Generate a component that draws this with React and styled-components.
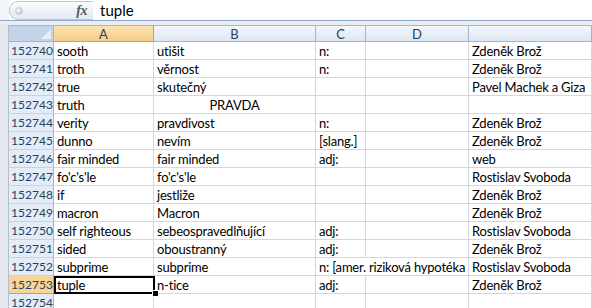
import React from "react";
import styled, { createGlobalStyle, css } from "styled-components";

const GlobalStyle = createGlobalStyle`
  html, body { margin: 0; padding: 0; background: #ffffff; overflow: hidden; }
  * { box-sizing: border-box; }
`;

const FONT = `Lato, "Liberation Sans", sans-serif`;

const Window = styled.div`
  width: 592px;
  height: 308px;
  overflow: hidden;
  background: #e9eef5;
  font-family: ${FONT};
  display: flex;
  flex-direction: column;
`;

const FormulaBar = styled.div`
  height: 21px;
  flex: none;
  display: flex;
  align-items: stretch;
  background: #ffffff;
  border-bottom: 1px solid #8fa9c9;
`;

const LeftGap = styled.div`
  width: 9px;
  flex: none;
  background: #f1f4f8;
`;

const FxBox = styled.div`
  width: 84px;
  flex: none;
  margin: 1px 0 0 0;
  display: flex;
  align-items: center;
  justify-content: space-between;
  padding: 0 6px 0 5px;
  border: 1px solid #b7c8dd;
  border-right: none;
  border-radius: 9px 0 0 9px;
  background: linear-gradient(#fbfcfe, #e2e9f3);
`;

const Knob = styled.span`
  width: 8px;
  height: 8px;
  border-radius: 50%;
  background: radial-gradient(circle at 35% 35%, #ffffff, #b4b9c0);
  border: 1px solid #c9ced5;
`;

const FxLabel = styled.span`
  font-family: "Liberation Serif", serif;
  font-style: italic;
  font-weight: bold;
  font-size: 14px;
  color: #555a60;
  letter-spacing: -0.5px;
`;

const FormulaText = styled.div`
  flex: 1;
  display: flex;
  align-items: center;
  padding-left: 7px;
  font-size: 15px;
  color: #000;
`;

const Spacer = styled.div`
  height: 4px;
  flex: none;
  background: #e9edf2;
`;

const SheetArea = styled.div`
  flex: 1;
  display: flex;
  min-height: 0;
`;

const LeftStrip = styled.div`
  width: 9px;
  flex: none;
  background: #e4e8ee;
  border-right: 1px solid #b3bfcd;
`;

const Grid = styled.div`
  flex: 1;
  display: grid;
  grid-template-columns: 45px 100px 162px 50px 103px 1fr;
  grid-auto-rows: 18px;
  grid-template-rows: 17px;
  background: #ffffff;
  align-content: start;
`;

const headerBase = css`
  display: flex;
  align-items: center;
  justify-content: center;
  font-size: 13px;
  color: #27415f;
  border-right: 1px solid #9eb6ce;
  border-bottom: 1px solid #9eb6ce;
  border-top: 1px solid #9eb6ce;
`;

const Corner = styled.div`
  ${headerBase};
  position: relative;
  background: #c2d3ea;
  &::after {
    content: "";
    position: absolute;
    right: 2px;
    bottom: 2px;
    border-style: solid;
    border-width: 0 0 10px 10px;
    border-color: transparent transparent #e6eef8 transparent;
  }
`;

const ColHeader = styled.div`
  ${headerBase};
  background: ${(p) =>
    p.$active
      ? "linear-gradient(#fbe3b4, #f6cd84)"
      : "linear-gradient(#f5f8fc, #dde6f1)"};
  border-right-color: ${(p) => (p.$active ? "#f29436" : "#9eb6ce")};
  border-bottom-color: ${(p) => (p.$active ? "#f29436" : "#9eb6ce")};
`;

const RowHeader = styled.div`
  display: flex;
  align-items: center;
  justify-content: center;
  padding-left: 2px;
  font-size: 12px;
  color: #27415f;
  background: ${(p) => (p.$active ? "#f8d597" : "#e4ecf7")};
  border-right: 1px solid ${(p) => (p.$active ? "#f29436" : "#9eb6ce")};
  border-bottom: 1px solid ${(p) => (p.$active ? "#f29436" : "#c5d3e6")};
`;

const Cell = styled.div`
  position: relative;
  display: flex;
  align-items: center;
  justify-content: ${(p) => (p.$center ? "center" : "flex-start")};
  padding-left: ${(p) => (p.$center ? "0" : "3px")};
  font-size: 13px;
  letter-spacing: -0.2px;
  color: #000;
  white-space: nowrap;
  overflow: visible;
  border-right: 1px solid #d0d7e5;
  border-bottom: 1px solid #d0d7e5;
  ${(p) => p.$span && `grid-column: span ${p.$span};`}
  ${(p) => p.$selected && `z-index: 2;`}
`;

const SelectionBox = styled.span`
  position: absolute;
  left: 0;
  top: 0;
  right: -2px;
  bottom: -1px;
  border: 2px solid #000;
  pointer-events: none;
`;

const FillHandle = styled.span`
  position: absolute;
  left: 98px;
  top: 14px;
  width: 7px;
  height: 7px;
  background: #000;
  border: 1px solid #fff;
`;

const rows = [
  [152740, "sooth", "utišit", "n:", "", "Zdeněk Brož"],
  [152741, "troth", "věrnost", "n:", "", "Zdeněk Brož"],
  [152742, "true", "skutečný", "", "", "Pavel Machek a Giza"],
  [152743, "truth", { t: "PRAVDA", center: true }, "", "", ""],
  [152744, "verity", "pravdivost", "n:", "", "Zdeněk Brož"],
  [152745, "dunno", "nevím", "[slang.]", "", "Zdeněk Brož"],
  [152746, "fair minded", "fair minded", "adj:", "", "web"],
  [152747, "fo'c's'le", "fo'c's'le", "", "", "Rostislav Svoboda"],
  [152748, "if", "jestliže", "", "", "Zdeněk Brož"],
  [152749, "macron", "Macron", "", "", "Zdeněk Brož"],
  [152750, "self righteous", "sebeospravedlňující", "adj:", "", "Rostislav Svoboda"],
  [152751, "sided", "oboustranný", "adj:", "", "Zdeněk Brož"],
  [152752, "subprime", "subprime", { t: "n: [amer. riziková hypotéka", span: 2 }, null, "Rostislav Svoboda"],
  [152753, "tuple", "n-tice", "adj:", "", "Zdeněk Brož"],
  [152754, "", "", "", "", ""],
];

const ACTIVE_ROW = 152753;

export default function App() {
  return (
    <>
      <GlobalStyle />
      <Window>
        <FormulaBar>
          <LeftGap />
          <FxBox>
            <Knob />
            <FxLabel>fx</FxLabel>
          </FxBox>
          <FormulaText>tuple</FormulaText>
        </FormulaBar>
        <Spacer />
        <SheetArea>
          <LeftStrip />
          <Grid>
            <Corner />
            <ColHeader $active>A</ColHeader>
            <ColHeader>B</ColHeader>
            <ColHeader>C</ColHeader>
            <ColHeader>D</ColHeader>
            <ColHeader />
            {rows.map(([num, ...cells]) => (
              <React.Fragment key={num}>
                <RowHeader $active={num === ACTIVE_ROW}>{num}</RowHeader>
                {cells.map((c, i) => {
                  if (c === null) return null;
                  const obj = typeof c === "object" ? c : { t: c };
                  const selected = num === ACTIVE_ROW && i === 0;
                  return (
                    <Cell
                      key={i}
                      $center={obj.center}
                      $span={obj.span}
                      $selected={selected}
                    >
                      {obj.t}
                      {selected && (
                        <>
                          <SelectionBox />
                          <FillHandle />
                        </>
                      )}
                    </Cell>
                  );
                })}
              </React.Fragment>
            ))}
          </Grid>
        </SheetArea>
      </Window>
    </>
  );
}
